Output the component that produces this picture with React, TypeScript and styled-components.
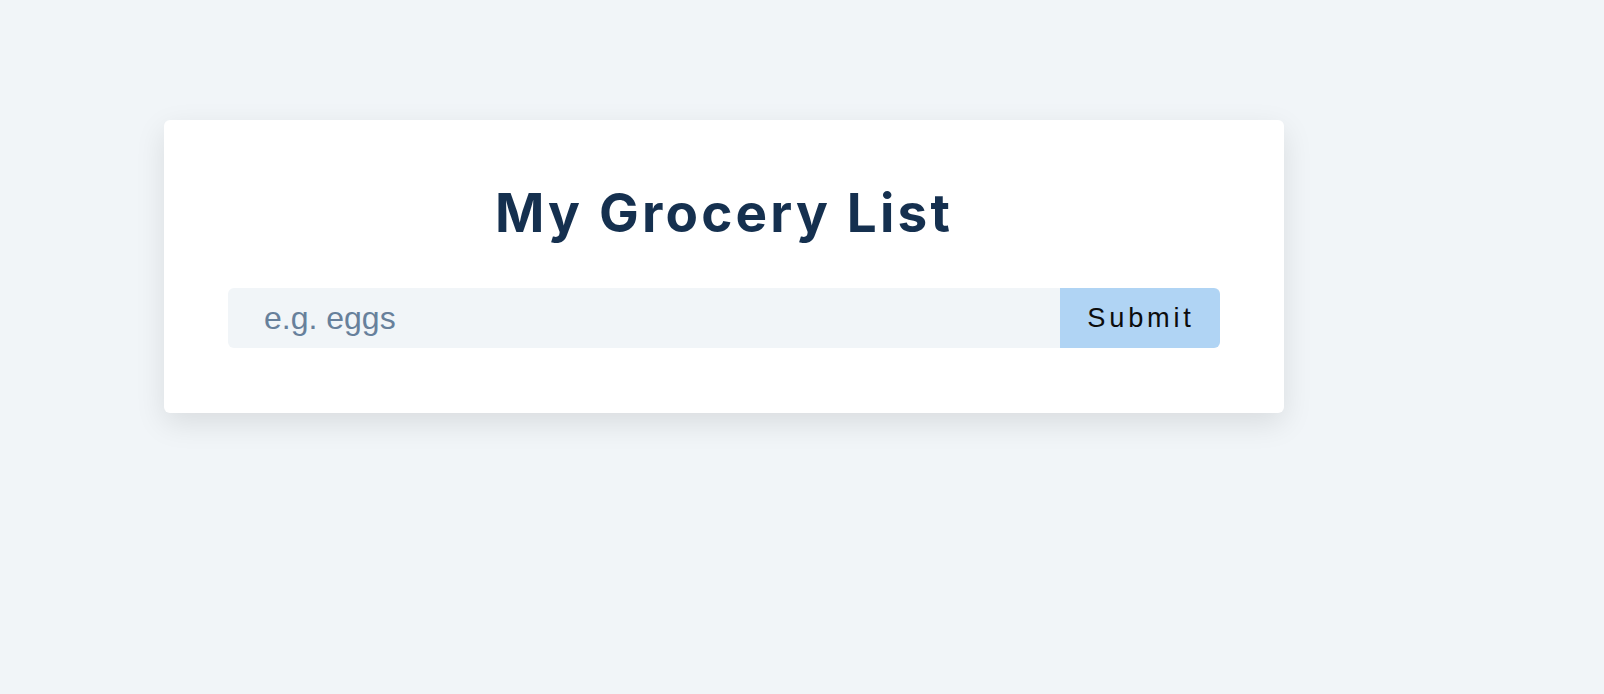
import React from "react";
import styled, { createGlobalStyle } from "styled-components";

const GlobalStyle = createGlobalStyle`
  html, body {
    margin: 0;
    padding: 0;
    background: #f1f5f8;
  }
  body {
    font-family: "Liberation Sans", Arial, sans-serif;
  }
  * { box-sizing: border-box; }
`;

const Page = styled.main`
  min-height: 694px;
  padding: 120px 0 0 164px;
`;

const Card = styled.section`
  width: 1120px;
  background: #ffffff;
  border-radius: 6px;
  box-shadow: 0 10px 30px rgba(0, 0, 0, 0.1);
  padding: 60px 64px 65px;
`;

const Title = styled.h3`
  margin: 0 0 42px;
  text-align: center;
  font-family: Inter, "Noto Sans", sans-serif;
  font-weight: 700;
  font-size: 53px;
  line-height: 66px;
  letter-spacing: 3.2px;
  color: #15304f;
`;

const Form = styled.form`
  display: flex;
  height: 60px;
`;

const Input = styled.input`
  flex: 1 0 auto;
  border: none;
  outline: none;
  background: #f1f5f8;
  border-radius: 6px 0 0 6px;
  padding: 8px 8px 8px 36px;
  font-family: "Liberation Sans", Arial, sans-serif;
  font-size: 32px;
  color: #67809b;
  &::placeholder {
    color: #67809b;
    opacity: 1;
  }
`;

const SubmitButton = styled.button`
  flex: 0 0 160px;
  border: none;
  background: #b0d4f4;
  border-radius: 0 6px 6px 0;
  font-family: "Liberation Sans", Arial, sans-serif;
  font-size: 27.2px;
  letter-spacing: 3.8px;
  color: #0c0c0c;
  padding: 8px 0 8px 2px;
  cursor: pointer;
`;

export default function App() {
  return (
    <>
      <GlobalStyle />
      <Page>
        <Card>
          <Title>My Grocery List</Title>
          <Form onSubmit={(e) => e.preventDefault()}>
            <Input type="text" placeholder="e.g. eggs" />
            <SubmitButton type="submit">Submit</SubmitButton>
          </Form>
        </Card>
      </Page>
    </>
  );
}
